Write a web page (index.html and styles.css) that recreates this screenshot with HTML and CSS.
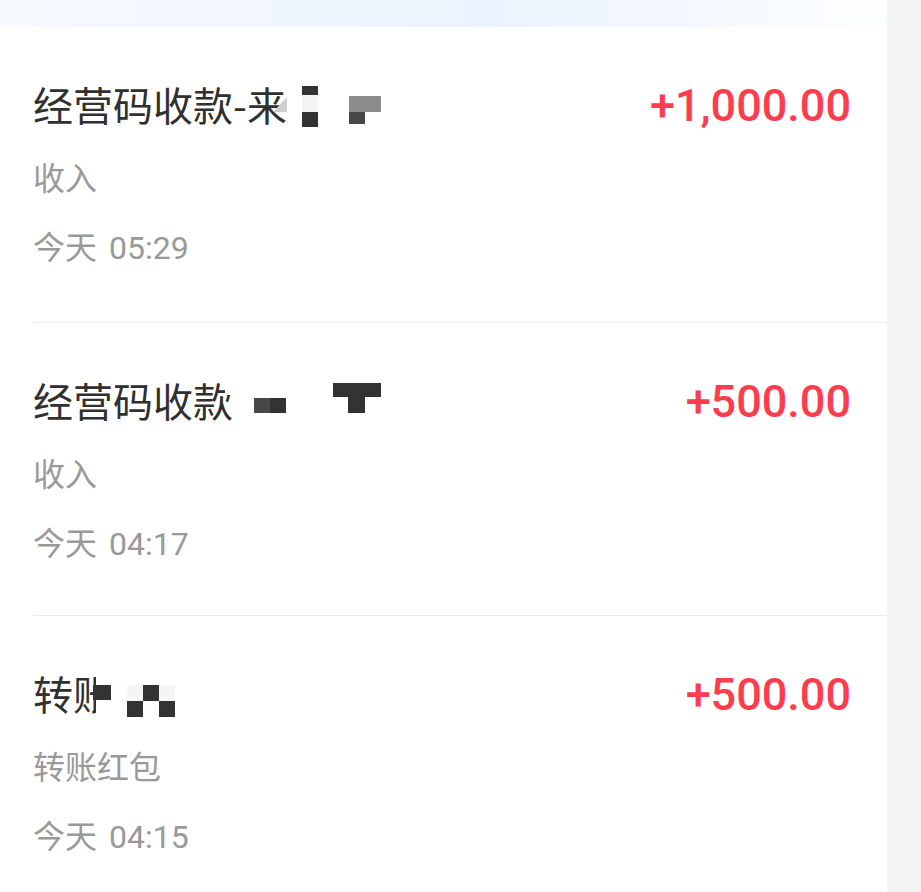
FILE: index.html
```html
<!DOCTYPE html>
<html lang="zh-CN">
<head>
    <meta charset="UTF-8">
    <meta name="viewport" content="width=device-width, initial-scale=1.0">
    <title>账单</title>
    <link rel="stylesheet" href="styles.css">
</head>
<body>
    <div class="page">
        <div class="top-band"></div>

        <ul class="bill-list">
            <li class="bill">
                <div class="bill-head">
                    <div class="bill-title">
                        经营码收款-来
                        <!-- 打码 -->
                        <span class="mosaic tri" style="left: 240px; top: 17px; width: 14px; height: 15px;"></span>
                        <span class="mosaic dark" style="left: 269px; top: 6px; width: 16px; height: 9px;"></span>
                        <span class="mosaic light" style="left: 269px; top: 15px; width: 16px; height: 17px;"></span>
                        <span class="mosaic dark" style="left: 269px; top: 32px; width: 16px; height: 15px;"></span>
                        <span class="mosaic gray" style="left: 316px; top: 16px; width: 32px; height: 16px;"></span>
                        <span class="mosaic mid" style="left: 316px; top: 32px; width: 16px; height: 12px;"></span>
                    </div>
                    <div class="bill-amount">+1,000.00</div>
                </div>
                <div class="bill-type">收入</div>
                <div class="bill-time">今天 05:29</div>
            </li>

            <li class="bill">
                <div class="bill-head">
                    <div class="bill-title">
                        经营码收款
                        <span class="mosaic white" style="left: 192px; top: 7px; width: 12px; height: 12px;"></span>
                        <span class="mosaic mid" style="left: 221px; top: 22px; width: 16px; height: 15px;"></span>
                        <span class="mosaic dark" style="left: 237px; top: 22px; width: 16px; height: 15px;"></span>
                        <span class="mosaic dark" style="left: 300px; top: 7px; width: 48px; height: 14px;"></span>
                        <span class="mosaic dark" style="left: 315px; top: 21px; width: 17px; height: 16px;"></span>
                    </div>
                    <div class="bill-amount">+500.00</div>
                </div>
                <div class="bill-type">收入</div>
                <div class="bill-time">今天 04:17</div>
            </li>

            <li class="bill">
                <div class="bill-head">
                    <div class="bill-title">
                        转账
                        <span class="mosaic white" style="left: 63px; top: 0; width: 40px; height: 48px;"></span>
                        <span class="mosaic dark" style="left: 60px; top: 16px; width: 18px; height: 15px;"></span>
                        <span class="mosaic light" style="left: 94px; top: 16px; width: 16px; height: 16px;"></span>
                        <span class="mosaic dark" style="left: 110px; top: 16px; width: 16px; height: 16px;"></span>
                        <span class="mosaic light" style="left: 126px; top: 16px; width: 16px; height: 16px;"></span>
                        <span class="mosaic dark" style="left: 94px; top: 32px; width: 16px; height: 16px;"></span>
                        <span class="mosaic dark" style="left: 126px; top: 32px; width: 16px; height: 16px;"></span>
                    </div>
                    <div class="bill-amount">+500.00</div>
                </div>
                <div class="bill-type">转账红包</div>
                <div class="bill-time">今天 04:15</div>
            </li>
        </ul>
    </div>
    <div class="side-strip"></div>
</body>
</html>
```

FILE: styles.css
```css
body {
    margin: 0;
    padding: 0;
    display: flex;
    height: 100vh;
    overflow: hidden;
    background-color: #f4f4f4;
    font-family: Roboto, "Noto Sans CJK SC", sans-serif;
}

.page {
    width: 887px;
    background-color: #fff;
}

.side-strip {
    flex: 1;
    background-color: #f4f4f4;
}

.top-band {
    height: 27px;
    background: linear-gradient(90deg, #f7faff 0%, #ebf3fe 55%, #fdfeff 100%);
}

.bill-list {
    list-style: none;
    margin: 0;
    padding: 0;
}

.bill {
    margin-left: 33px;
    padding: 53px 36px 51px 0;
    border-bottom: 1px solid #ebebeb;
}

.bill:first-child {
    padding-bottom: 54px;
}

.bill-head {
    display: flex;
    justify-content: space-between;
    align-items: baseline;
}

.bill-title {
    position: relative;
    font-family: "Noto Sans CJK SC", sans-serif;
    font-size: 40px;
    line-height: 48px;
    color: #303030;
}

.bill-amount {
    font-family: Roboto, sans-serif;
    font-weight: 500;
    font-size: 45px;
    line-height: 48px;
    color: #fd3c4e;
}

.bill-type {
    margin-top: 26px;
    font-family: "Noto Sans CJK SC", sans-serif;
    font-size: 32px;
    line-height: 40px;
    color: #999;
}

.bill-time {
    margin-top: 32px;
    font-size: 32px;
    line-height: 40px;
    word-spacing: 4px;
    color: #999;
}

/* 打码块 */
.mosaic {
    position: absolute;
}

.mosaic.dark {
    background-color: #333;
}

.mosaic.mid {
    background-color: #484848;
}

.mosaic.gray {
    background-color: #8c8c8c;
}

.mosaic.light {
    background-color: #f5f5f5;
}

.mosaic.white {
    background-color: #fff;
}

.mosaic.tri {
    background-color: #cfcfcf;
    clip-path: polygon(100% 0, 100% 100%, 0 100%);
}
```
